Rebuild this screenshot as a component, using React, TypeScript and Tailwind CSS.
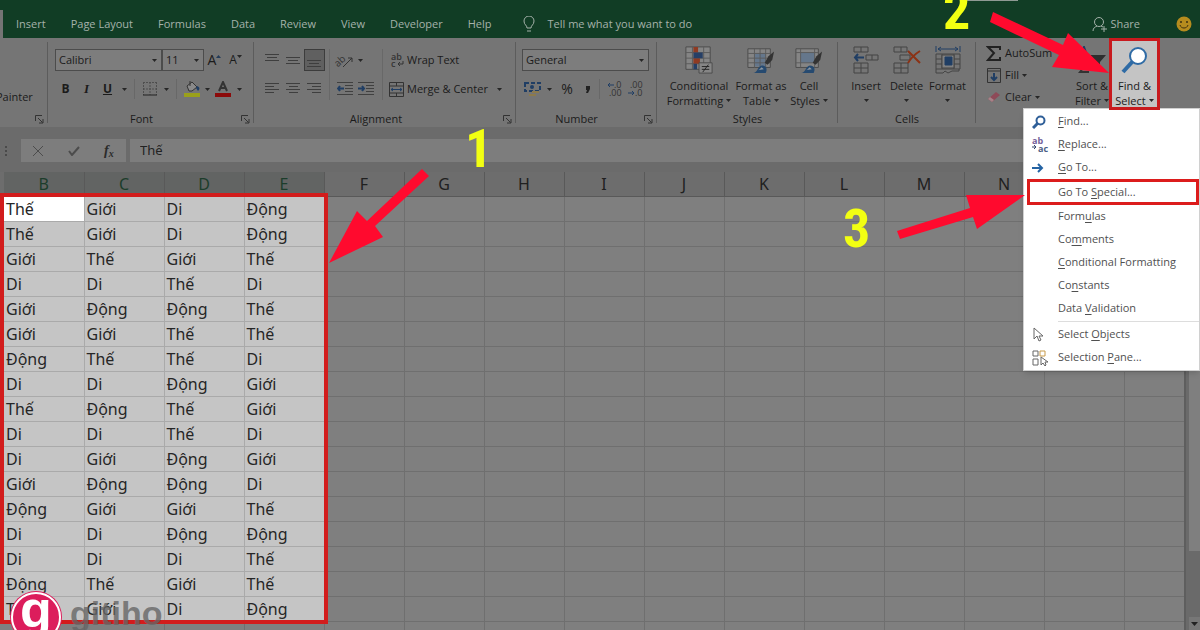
import React from 'react';

const columns = ['B', 'C', 'D', 'E', 'F', 'G', 'H', 'I', 'J', 'K', 'L', 'M', 'N', 'O'];

const rows = [
  ['Thế', 'Giới', 'Di', 'Động'],
  ['Thế', 'Giới', 'Di', 'Động'],
  ['Giới', 'Thế', 'Giới', 'Thế'],
  ['Di', 'Di', 'Thế', 'Di'],
  ['Giới', 'Động', 'Động', 'Thế'],
  ['Giới', 'Giới', 'Thế', 'Thế'],
  ['Động', 'Thế', 'Thế', 'Di'],
  ['Di', 'Di', 'Động', 'Giới'],
  ['Thế', 'Động', 'Thế', 'Giới'],
  ['Di', 'Di', 'Thế', 'Di'],
  ['Di', 'Giới', 'Động', 'Giới'],
  ['Giới', 'Động', 'Động', 'Di'],
  ['Động', 'Giới', 'Giới', 'Thế'],
  ['Di', 'Di', 'Động', 'Động'],
  ['Di', 'Di', 'Di', 'Thế'],
  ['Động', 'Thế', 'Giới', 'Thế'],
  ['Thế', 'Giới', 'Di', 'Động'],
];

const tabs = ['Insert', 'Page Layout', 'Formulas', 'Data', 'Review', 'View', 'Developer', 'Help'];

const Caret: React.FC<{ className?: string }> = ({ className = '' }) => (
  <svg viewBox="0 0 5 3" className={`inline-block h-[3px] w-[5px] shrink-0 ${className}`}>
    <path d="M0 0h5L2.5 3z" fill="#262626" />
  </svg>
);

const Separator = () => <div className="h-full w-px bg-[#686868]" />;

const Launcher = () => (
  <button aria-label="More options" className="absolute right-[4px] bottom-[3px]">
    <svg viewBox="0 0 9 9" className="h-[9px] w-[9px]" fill="none" stroke="#333">
      <path d="M.5 6V.5H7M3 3l4.500 4.500M8 4v4H4" />
    </svg>
  </button>
);

interface GroupProps {
  label?: string;
  launcher?: boolean;
  className?: string;
  children: React.ReactNode;
}

const Group: React.FC<GroupProps> = ({ label, launcher, className = '', children }) => (
  <section className={`relative flex shrink-0 flex-col ${className}`}>
    <div className="flex-1">{children}</div>
    {label && <h2 className={`h-4 text-center leading-4 ${launcher ? 'pr-[26px]' : ''}`}>{label}</h2>}
    {launcher && <Launcher />}
    <div className="absolute top-1 right-0 bottom-1 w-px bg-[#5c5c5c]" />
  </section>
);

interface DropBoxProps {
  label: string;
  value: string;
  className?: string;
}

const DropBox: React.FC<DropBoxProps> = ({ label, value, className = '' }) => (
  <div className={`relative h-[22px] ${className}`}>
    <select aria-label={label} className="h-full w-full appearance-none border border-[#4c4c4c] bg-[#7d7d7d] px-[3px]">
      <option>{value}</option>
    </select>
    <Caret className="pointer-events-none absolute top-[10px] right-[5px]" />
  </div>
);

interface ToolProps {
  label: string;
  className?: string;
  children: React.ReactNode;
}

const Tool: React.FC<ToolProps> = ({ label, className = 'w-[21px]', children }) => (
  <button aria-label={label} className={`flex h-[22px] shrink-0 items-center justify-center ${className}`}>
    {children}
  </button>
);

const Lines: React.FC<{ d: string }> = ({ d }) => (
  <svg viewBox="0 0 15 16" className="h-4 w-[15px]" fill="none" stroke="#3e3e3e">
    <path d={d} />
  </svg>
);

interface BigButtonProps {
  lines: [string, string];
  className?: string;
  children: React.ReactNode;
}

const BigButton: React.FC<BigButtonProps> = ({ lines, className = '', children }) => (
  <button className={`flex flex-col items-center pt-2 whitespace-nowrap ${className}`}>
    {children}
    <span className="mt-1 leading-[15px]">{lines[0]}</span>
    <span className="flex h-[15px] items-center gap-[3px] leading-[15px]">
      {lines[1]}
      <Caret />
    </span>
  </button>
);

const ConditionalIcon = () => (
  <svg viewBox="0 0 30 30" className="h-7 w-[30px]">
    <path d="M1 1h26v24H1z" fill="#858585" stroke="#4a4a4a" />
    <path d="M1 7h26M1 13h26M1 19h26M8 1v24M20 1v24" stroke="#5a5a5a" fill="none" />
    <path d="M9 1h5v6H9zM9 13h7v6H9z" fill="#8f3a22" />
    <path d="M9 7h10v6H9zM9 19h4v6H9z" fill="#263f66" />
    <path d="M15 18h14v11H15z" fill="#868686" stroke="#4a4a4a" />
    <path d="M18 22h8M18 25h8M25 20l-6 8" stroke="#222" fill="none" />
  </svg>
);

const TableStyleIcon: React.FC<{ plain?: boolean }> = ({ plain }) => (
  <svg viewBox="0 0 30 30" className="h-7 w-[30px]">
    <path d="M1 3h24v20H1z" fill="#858585" stroke="#4a4a4a" />
    <path d={plain ? 'M6 7h15v11H6z' : 'M8 8h12v14H8z'} fill="#65778c" />
    <path d={plain ? 'M1 7h24M1 18h24M6 3v20M21 3v20' : 'M1 8h24M1 13h24M1 18h24M8 3v20M14 3v20M20 3v20'} stroke="#5a5a5a" fill="none" />
    <path d="M29 6l-2 9-5 5-3-2 4-7z" fill="#333" />
    <path d="M7 29c5-1 4-7 9-8 5 0 6 4 4 8z" fill="#264a70" />
    <path d="M11 26c3 0 3-3 5-3l2 2z" fill="#8d98a3" />
  </svg>
);

const InsertIcon = () => (
  <svg viewBox="0 0 28 28" className="h-7 w-7" fill="none" stroke="#454545">
    <path d="M2 1h14v5H2zM9 1v5M14 9h12v5H14zM20 9v5M2 17h14v10H2zM2 22h14M9 17v10" />
    <path d="M12 11.500H3M6 8l-3 3.500L6 15" stroke="#203e64" strokeWidth="2" />
  </svg>
);

const DeleteIcon = () => (
  <svg viewBox="0 0 28 28" className="h-7 w-7" fill="none" stroke="#454545">
    <path d="M1 1h13v5H1zM8 1v5M7 9h10v5H7zM1 17h14v10H1zM1 22h14M8 17v10" />
    <path d="M15 5l12 12M27 5c-5 3-9 7-12 12" stroke="#8c3215" strokeWidth="2" />
  </svg>
);

const FormatIcon = () => (
  <svg viewBox="0 0 28 28" className="h-7 w-7" fill="none" stroke="#454545">
    <path d="M2 8h24v15H2zM2 13h24M2 18h24M8 8v15M20 8v15M2 23v4h7l2-2 3 2 4-2h7v-2" />
    <path d="M8 9h12v13H8z" fill="#808080" />
    <path d="M11 11h7v8h-7z" fill="#203e64" stroke="#203e64" />
    <path d="M2 0v6M26 0v6M4 3h20M7 1L4 3l3 2M21 1l3 2-3 2" stroke="#203e64" />
  </svg>
);

const SearchIcon: React.FC<{ className?: string }> = ({ className = '' }) => (
  <svg viewBox="0 0 28 28" className={className} fill="none" stroke="#2f6ba5">
    <path d="M12 15L2 26" strokeWidth="4" />
    <circle cx="17" cy="10" r="8" fill="#fff" strokeWidth="2" />
  </svg>
);

const SmallSearchIcon = () => (
  <svg viewBox="0 0 14 14" className="h-[14px] w-[14px]" fill="none" stroke="#2f5f98">
    <path d="M6 8l-5 5" strokeWidth="3" />
    <circle cx="8.500" cy="5.500" r="4" strokeWidth="2" />
  </svg>
);

const ReplaceIcon = () => (
  <svg viewBox="0 0 16 16" className="h-4 w-4 overflow-visible">
    <text x="0" y="7" fontSize="9" fontWeight="700" fill="#75629a">ab</text>
    <text x="6" y="15" fontSize="9" fontWeight="700" fill="#4c5f85">ac</text>
    <path d="M0 10h4M2 8l2 2-2 2" fill="none" stroke="#34466b" />
  </svg>
);

const GoToIcon = () => (
  <svg viewBox="0 0 12 12" className="h-3 w-3" fill="none" stroke="#2463a3" strokeWidth="2">
    <path d="M0 6h10M6 2l4 4-4 4" />
  </svg>
);

const CursorIcon = () => (
  <svg viewBox="0 0 12 16" className="h-4 w-3" fill="#fff" stroke="#666">
    <path d="M2 1v11l3-3 2 5 2-1-2-4h4z" />
  </svg>
);

const PaneIcon = () => (
  <svg viewBox="0 0 16 16" className="h-4 w-4" fill="none" stroke="#666">
    <path d="M1 1h5v5H1zM1 9h5v6H1zM9 7v8l2-2 2 3 1-1-1-3h3z" />
    <path d="M8 1h5v5H8z" stroke="#c79a4b" />
  </svg>
);

interface MenuEntry {
  // the accelerator letter stands between underscores
  text: string;
  icon?: React.ReactNode;
  boxed?: boolean;
  divider?: boolean;
}

const menu: MenuEntry[] = [
  { text: '_F_ind...', icon: <SmallSearchIcon /> },
  { text: '_R_eplace...', icon: <ReplaceIcon /> },
  { text: '_G_o To...', icon: <GoToIcon /> },
  { text: 'Go To _S_pecial...', boxed: true },
  { text: 'Form_u_las' },
  { text: 'Co_m_ments' },
  { text: '_C_onditional Formatting' },
  { text: 'Co_n_stants' },
  { text: 'Data _V_alidation' },
  { text: 'Select _O_bjects', icon: <CursorIcon />, divider: true },
  { text: 'Selection _P_ane...', icon: <PaneIcon /> },
];

const MenuItem: React.FC<{ entry: MenuEntry }> = ({ entry }) => {
  const [before, key, after] = entry.text.split('_');
  return (
    <li>
      {entry.divider && <div className="my-px ml-[34px] h-px bg-[#ddd]" />}
      <button
        className={`relative flex w-full items-center text-left whitespace-pre ${entry.boxed ? 'h-[26px]' : 'h-[23px]'}`}
      >
        <span className="flex w-[34px] shrink-0 items-center pl-2">{entry.icon}</span>
        <span>{before}<u className="underline-offset-2">{key}</u>{after}</span>
        {entry.boxed && <span className="absolute inset-y-0 right-0 left-[3px] border-3 border-[#dc1c1c]" />}
      </button>
    </li>
  );
};

const TitleTabs = () => (
  <header className="relative flex h-[38px] shrink-0 items-end bg-[#113d25] text-[#a5b2aa]">
    <div className="h-7 w-[3px] bg-[#747474]" />
    <nav className="flex h-7 items-center gap-[25px] pl-[13px]">
      {tabs.map((tab) => (
        <button key={tab}>{tab}</button>
      ))}
    </nav>
    <label className="flex h-7 flex-1 items-center gap-3 pl-8">
      <svg viewBox="0 0 12 16" className="h-4 w-3" fill="none" stroke="#a5b2aa">
        <path d="M4 12c0-3-3-3-3-7a5 5 0 0 1 10 0c0 4-3 4-3 7zM4 15h4" />
      </svg>
      <input
        className="w-[180px] placeholder:text-[#a5b2aa] placeholder:opacity-100"
        placeholder="Tell me what you want to do"
      />
    </label>
    <button className="flex h-7 items-center gap-[3px] pr-9">
      <svg viewBox="0 0 16 16" className="h-4 w-4" fill="none" stroke="#a5b2aa">
        <circle cx="8" cy="6" r="4.500" />
        <path d="M2 15c0-3 2-4 4-5M10 10l2 1M13 10v6M10 13h6" />
      </svg>
      Share
    </button>
    <button aria-label="Feedback" className="flex h-7 items-center pr-2">
      <svg viewBox="0 0 16 16" className="h-4 w-4">
        <circle cx="8" cy="8" r="7.500" fill="#b68c1e" />
        <circle cx="5" cy="6" r="1" fill="#3d3010" />
        <circle cx="11" cy="6" r="1" fill="#3d3010" />
        <path d="M4 9c1 4 7 4 8 0" fill="none" stroke="#3d3010" />
      </svg>
    </button>
    <div className="absolute top-0 right-[182px] h-px w-[52px] bg-[#8f9a94]" />
  </header>
);

const FontGroup = () => (
  <Group label="Font" launcher className="w-[206px] pt-[11px] pl-[7px]">
    <div className="flex">
      <DropBox label="Font name" value="Calibri" className="w-[107px]" />
      <DropBox label="Font size" value="11" className="w-[42px]" />
      <Tool label="Increase font size" className="w-[21px] text-sm">
        A<svg viewBox="0 0 5 3" className="mb-2 h-[3px] w-[5px]"><path d="M0 3h5L2.500 0z" fill="#223a58" /></svg>
      </Tool>
      <Tool label="Decrease font size" className="w-[21px] text-xs">
        A<Caret className="mb-2" />
      </Tool>
    </div>
    <div className="mt-[7px] flex items-center">
      <Tool label="Bold"><b className="text-xs">B</b></Tool>
      <Tool label="Italic"><i className="font-['Liberation_Serif',serif] text-[13px] font-bold">I</i></Tool>
      <Tool label="Underline"><u className="text-xs font-bold">U</u></Tool>
      <Tool label="Underline style" className="w-3"><Caret /></Tool>
      <div className="mx-1 h-5"><Separator /></div>
      <Tool label="Borders">
        <svg viewBox="0 0 14 14" className="h-[14px] w-[14px]" fill="none" stroke="#4f4f4f">
          <path d="M.5 0v13M7 0v13M13.500 0v13M0 .5h14M0 7h14" strokeDasharray="2 1" />
          <path d="M0 13h14" stroke="#222" />
        </svg>
      </Tool>
      <Tool label="Border style" className="w-3"><Caret /></Tool>
      <div className="mx-1 h-5"><Separator /></div>
      <Tool label="Fill color">
        <svg viewBox="0 0 18 16" className="h-4 w-[18px]">
          <path d="M4 5l5-4 5 5-5 4H6z" fill="#8a8a8a" stroke="#333" />
          <path d="M7 5V0" stroke="#333" />
          <path d="M14 5c3 1 3 3 1 5l-2-3z" fill="#203e64" />
          <path d="M1 12h16v4H1z" fill="#9aa01a" />
        </svg>
      </Tool>
      <Tool label="Fill color list" className="w-[10px]"><Caret /></Tool>
      <Tool label="Font color">
        <svg viewBox="0 0 16 16" className="h-4 w-4">
          <path d="M4 10L8 1l4 9M5.500 7h5" fill="none" stroke="#333" strokeWidth="2" />
          <path d="M0 12h16v4H0z" fill="#8c0a0a" />
        </svg>
      </Tool>
      <Tool label="Font color list" className="w-3"><Caret /></Tool>
    </div>
  </Group>
);

const AlignmentGroup = () => (
  <Group label="Alignment" launcher className="w-[262px] pt-[11px] pl-[8px]">
    <div className="flex">
      <div className="grid grid-cols-3 gap-y-[7px]">
        <Tool label="Top align"><Lines d="M0 2.500h14M2 5.500h10M0 8.500h14" /></Tool>
        <Tool label="Middle align"><Lines d="M0 5.500h14M2 8.500h10M0 11.500h14" /></Tool>
        <Tool label="Bottom align" className="w-[21px] border border-[#3c3c3c] bg-[#606060]"><Lines d="M0 8.500h14M2 11.500h10M0 14.500h14" /></Tool>
        <Tool label="Align left"><Lines d="M0 2.500h14M0 5.500h9M0 8.500h14M0 11.500h9" /></Tool>
        <Tool label="Center"><Lines d="M0 2.500h14M3 5.500h9M0 8.500h14M3 11.500h9" /></Tool>
        <Tool label="Align right"><Lines d="M0 2.500h14M5 5.500h9M0 8.500h14M5 11.500h9" /></Tool>
      </div>
      <div className="mx-1"><Separator /></div>
      <div>
        <div className="flex">
          <Tool label="Orientation">
            <svg viewBox="0 0 18 16" className="h-4 w-[18px] overflow-visible" fill="none" stroke="#333">
              <text x="0" y="13" fontSize="10" fill="#333" stroke="none" transform="rotate(-42 4 12)">ab</text>
              <path d="M7 15l9-9M12 6h4v4" />
            </svg>
          </Tool>
          <Tool label="Orientation list" className="w-[10px]"><Caret /></Tool>
        </div>
        <div className="mt-[7px] flex">
          <Tool label="Decrease indent">
            <svg viewBox="0 0 16 14" className="h-[14px] w-4" fill="none" stroke="#404040">
              <path d="M0 .5h16M8 3.500h8M8 6.500h8M8 9.500h8M0 12.500h16" />
              <path d="M7 6.500H1M3 4L1 6.500 3 9" stroke="#203e64" strokeWidth="2" />
            </svg>
          </Tool>
          <Tool label="Increase indent">
            <svg viewBox="0 0 16 14" className="h-[14px] w-4" fill="none" stroke="#404040">
              <path d="M0 .5h16M8 3.500h8M8 6.500h8M8 9.500h8M0 12.500h16" />
              <path d="M0 6.500h6M4 4l2 2.500L4 9" stroke="#203e64" strokeWidth="2" />
            </svg>
          </Tool>
        </div>
      </div>
      <div className="mx-1.5"><Separator /></div>
      <div className="whitespace-nowrap">
        <button className="flex h-[22px] items-center gap-[3px]">
          <svg viewBox="0 0 15 16" className="h-4 w-[15px] overflow-visible" fill="none" stroke="#333">
            <text x="2" y="8" fontSize="9" fontWeight="600" fill="#333" stroke="none">ab</text>
            <text x="2" y="15" fontSize="9" fontWeight="600" fill="#333" stroke="none">c</text>
            <path d="M14 9v3H9M11 10l-2 2 2 2" />
          </svg>
          Wrap Text
        </button>
        <button className="mt-[7px] flex h-[22px] items-center gap-[3px]">
          <svg viewBox="0 0 15 15" className="h-[15px] w-[15px]" fill="none" stroke="#333">
            <path d="M.5.5h14v14H.5zM0 4h15M0 11h15M7.500 0v4M7.500 11v4" />
            <path d="M2 7.500h11M4 6L2 7.500 4 9M11 6l2 1.500L11 9" stroke="#203e64" />
          </svg>
          Merge &amp; Center
          <Caret className="ml-[6px]" />
        </button>
      </div>
    </div>
  </Group>
);

const DecimalIcon: React.FC<{ right?: boolean }> = ({ right }) => (
  <svg viewBox="0 0 16 16" className="h-4 w-4 overflow-visible" fill="none">
    <text x={right ? 2 : 7} y="7" fontSize="9" fill="#333">{right ? '.00' : '.0'}</text>
    <text x={right ? 7 : 2} y="15" fontSize="9" fill="#333">{right ? '.0' : '.00'}</text>
    <path d={right ? 'M0 12h6M4 10l2 2-2 2' : 'M7 4H1M3 2L1 4l2 2'} stroke="#203e64" />
  </svg>
);

const NumberGroup = () => (
  <Group label="Number" launcher className="w-[141px] pt-[11px] pl-[6px]">
    <DropBox label="Number format" value="General" className="w-[127px]" />
    <div className="mt-[7px] flex items-center">
      <Tool label="Accounting format">
        <svg viewBox="0 0 17 15" className="h-[15px] w-[17px]" fill="none">
          <path d="M1 1h15v8H1z" stroke="#203e64" strokeWidth="2" strokeDasharray="4 2" />
          <circle cx="8" cy="5" r="2" fill="#203e64" />
          <path d="M8 9h7v2H8zM5 12h7v2H5z" fill="#8c7a4c" />
        </svg>
      </Tool>
      <Tool label="Accounting list" className="w-3"><Caret /></Tool>
      <Tool label="Percent style" className="w-6"><span className="text-sm">%</span></Tool>
      <Tool label="Comma style" className="w-4">
        <svg viewBox="0 0 5 7" className="h-[7px] w-[5px]"><path d="M1 0h4v3L3 7H1l1-3H1z" fill="#222" /></svg>
      </Tool>
      <div className="mx-1 h-5"><Separator /></div>
      <Tool label="Increase decimal"><DecimalIcon /></Tool>
      <Tool label="Decrease decimal"><DecimalIcon right /></Tool>
    </div>
  </Group>
);

const EditingGroup = () => (
  <div className="relative flex shrink-0 items-start pl-[10px]">
    <div className="w-[86px] pt-1 whitespace-nowrap">
      <button className="flex h-[22px] items-center gap-[3px]">
        <svg viewBox="0 0 16 15" className="h-[15px] w-4" fill="none" stroke="#222" strokeWidth="2">
          <path d="M14 4V1H2l6 6-6 7h12v-3" />
        </svg>
        AutoSum
      </button>
      <button className="flex h-[22px] items-center gap-[3px]">
        <svg viewBox="0 0 16 15" className="h-[15px] w-4" fill="none" stroke="#333">
          <path d="M1.500.5h13v14h-13zM1 3h14" />
          <path d="M8 5v7M5 9l3 3 3-3" stroke="#203e64" strokeWidth="2" />
        </svg>
        Fill <Caret />
      </button>
      <button className="flex h-[22px] items-center gap-[3px]">
        <svg viewBox="0 0 16 15" className="h-[15px] w-4">
          <path d="M2 9l8-7 4 3-8 7z" fill="#8e4a58" />
          <path d="M2 9l2-2 4 3-2 2z" fill="#a68288" />
        </svg>
        Clear <Caret />
      </button>
    </div>
    <BigButton lines={['Sort &', 'Filter']} className="w-[40px]">
      <svg viewBox="0 0 28 28" className="h-7 w-7">
        <path d="M2 12L6 1l4 11M3 8h6" fill="none" stroke="#203e64" strokeWidth="2" />
        <path d="M1 16h9l-8 10h9" fill="none" stroke="#333" strokeWidth="2" />
        <path d="M12 9h16l-6 7v8l-4-3v-5z" fill="#2e2e2e" />
      </svg>
    </BigButton>
    <div className="relative">
      <BigButton lines={['Find &', 'Select']} className="h-[71px] w-[45px] bg-[#c4c4c4]">
        <SearchIcon className="h-7 w-7" />
      </BigButton>
      <ul className="absolute top-[70px] -left-[89px] w-[177px] border border-[#d0d0d0] bg-white py-px text-[#505050] shadow-md">
        {menu.map((entry) => (
          <MenuItem key={entry.text} entry={entry} />
        ))}
      </ul>
      <div className="pointer-events-none absolute -inset-x-[3px] top-0 -bottom-px border-3 border-[#c81a1e]" />
    </div>
  </div>
);

const Ribbon = () => (
  <div className="relative z-10 flex h-[89px] shrink-0 bg-[#757575] text-[#1b1b1b]">
    <Group launcher className="w-12">
      <button className="absolute top-[51px] left-[-4px] leading-4">Painter</button>
    </Group>
    <FontGroup />
    <AlignmentGroup />
    <NumberGroup />
    <Group label="Styles" className="w-[181px]">
      <div className="flex pl-[9px]">
        <BigButton lines={['Conditional', 'Formatting']} className="w-[66px]"><ConditionalIcon /></BigButton>
        <BigButton lines={['Format as', 'Table']} className="w-[58px]"><TableStyleIcon /></BigButton>
        <BigButton lines={['Cell', 'Styles']} className="w-[38px]"><TableStyleIcon plain /></BigButton>
      </div>
    </Group>
    <Group label="Cells" className="w-[138px]">
      <div className="flex pl-[8px]">
        <BigButton lines={['Insert', '']} className="w-10"><InsertIcon /></BigButton>
        <BigButton lines={['Delete', '']} className="w-[41px]"><DeleteIcon /></BigButton>
        <BigButton lines={['Format', '']} className="w-[41px]"><FormatIcon /></BigButton>
      </div>
    </Group>
    <EditingGroup />
  </div>
);

const FormulaBar = () => (
  <div className="flex h-[45px] shrink-0 bg-[#6b6b6b] pt-3 pb-[10px]">
    <div className="flex w-[21px] items-center pl-[5px]">
      <svg viewBox="0 0 2 10" className="h-[10px] w-[2px]" fill="#4a4a4a">
        <path d="M0 0h2v2H0zM0 4h2v2H0zM0 8h2v2H0z" />
      </svg>
    </div>
    <div className="flex w-[105px] items-center justify-around bg-[#7d7d7d]">
      <button aria-label="Cancel">
        <svg viewBox="0 0 10 10" className="h-[10px] w-[10px]" fill="none" stroke="#4c4c4c"><path d="M0 0l10 10M10 0L0 10" /></svg>
      </button>
      <button aria-label="Enter">
        <svg viewBox="0 0 12 10" className="h-[10px] w-3" fill="none" stroke="#4c4c4c" strokeWidth="2"><path d="M1 5l3 4 7-8" /></svg>
      </button>
      <button aria-label="Insert function" className="font-['Liberation_Serif',serif] text-sm font-bold text-[#2b2b2b] italic">
        f<sub className="text-[10px]">x</sub>
      </button>
    </div>
    <input
      aria-label="Formula"
      defaultValue="Thế"
      className="ml-1 min-w-0 flex-1 bg-[#7d7d7d] px-[10px] font-['Noto_Sans',sans-serif] text-[13px] text-[#222]"
    />
  </div>
);

const Sheet = () => (
  <div className="flex min-h-0 flex-1 overflow-hidden">
    <div className="relative min-w-0 flex-1 self-start">
      <table className="w-full table-fixed border-collapse font-['Noto_Sans',sans-serif]">
        <colgroup>
          <col className="w-1" />
          {columns.map((c) => (
            <col key={c} className="w-20" />
          ))}
          <col />
        </colgroup>
        <thead>
          <tr className="h-6 bg-[#6d6d6d] text-base leading-5 text-[#202020]">
            <td />
            {columns.map((c, i) => (
              <th
                key={c}
                className={`border-r border-b border-[#595959] p-0 font-normal ${i < 4 ? 'bg-[#626463] text-[#1c3d2b]' : ''}`}
              >
                {c}
              </th>
            ))}
            <td className="border-b border-[#595959]" />
          </tr>
        </thead>
        <tbody>
          {[...rows, []].map((row, r) => (
            <tr key={r} className="h-[25px] bg-[#7f7f7f] text-base leading-5 text-[#262626]">
              <td />
              {columns.map((c, i) => {
                const first = r === 0 && i === 0;
                const picked = i < row.length;
                return (
                  <td
                    key={c}
                    className={`border-r border-b p-0 pl-[2px] ${picked ? 'border-[#aaa]' : 'border-[#6f6f6f]'} ${first ? 'bg-white' : picked ? 'bg-[#c5c5c5]' : ''}`}
                  >
                    {row[i]}
                  </td>
                );
              })}
              <td className="border-b border-[#6f6f6f]" />
            </tr>
          ))}
        </tbody>
      </table>
      {/* frame round the selected range */}
      <div className="absolute top-[21px] left-0 h-[431px] w-[328px] border-4 border-[#d21c1c]" />
    </div>
    <div className="flex w-4 flex-col border-l-2 border-[#5e5e5e] bg-[#6a6a6a] pl-[3px]">
      <div className="h-[379px] bg-[#7f7f7f]" />
      <button aria-label="Scroll down" className="mt-auto flex h-[13px] items-center justify-center bg-[#777]">
        <svg viewBox="0 0 7 4" className="h-1 w-[7px]"><path d="M0 0h7L3.500 4z" fill="#222" /></svg>
      </button>
    </div>
  </div>
);

const stepClass =
  "absolute font-['Liberation_Sans_Narrow','Roboto_Condensed','Open_Sans',sans-serif] text-[54px] leading-none font-bold text-[#f2ff12]";

// numbered steps and arrows drawn over the sheet
const Callouts = () => (
  <div className="pointer-events-none absolute inset-0 z-20 overflow-hidden">
    <svg className="h-full w-full" fill="#ff0a2e">
      <path d="M422 169l7 7-54 50 8 11-54 26 28-52 10 10z" />
      <path d="M993 12l70 33 5-12 41 40-57-6 7-12-69-33z" />
      <path d="M897 231l73-23-4-13 59 0-48 34-4-12-73 22z" />
    </svg>
    <span className={`${stepClass} top-[122px] left-[465px]`}>1</span>
    <span className={`${stepClass} top-[-16px] left-[943px]`}>2</span>
    <span className={`${stepClass} top-[202px] left-[843px]`}>3</span>
  </div>
);

const Watermark = () => (
  <div className="absolute top-[592px] left-[11px] z-20 flex items-start font-['Liberation_Sans',sans-serif] font-bold whitespace-nowrap">
    <span className="flex h-[50px] w-[50px] items-center justify-center rounded-full border-2 border-white bg-[#dc1d5c] pb-4 text-[52px] leading-none text-white ring-1 ring-[#dc1d5c]">
      g
    </span>
    <span className="ml-[9px] text-[34px] leading-[42px] text-[#666]/80">gitiho</span>
  </div>
);

const App: React.FC = () => (
  <main className="relative flex h-screen w-full flex-col overflow-hidden bg-[#6d6d6d] font-['Open_Sans',sans-serif] text-[11px]">
    <TitleTabs />
    <Ribbon />
    <FormulaBar />
    <Sheet />
    <Callouts />
    <Watermark />
  </main>
);

export default App;
